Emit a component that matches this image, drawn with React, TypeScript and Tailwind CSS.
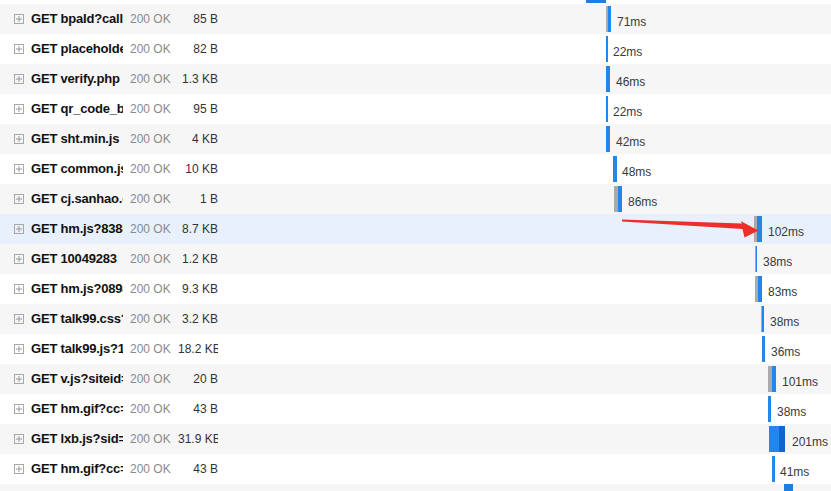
import React from "react";

type Req = {
  name: string;
  size: string;
  start: number; // absolute x of bar start
  wait: number; // gray segment width
  recv: number; // blue segment width
  extra?: number; // darker blue segment width
  gap: number; // space between bar and label
  time: string;
};

const TIMELINE_X = 218;

const requests: Req[] = [
  { name: "bpaId?callback", size: "85 B", start: 606, wait: 2, recv: 3, gap: 6, time: "71ms" },
  { name: "placeholder.js", size: "82 B", start: 606, wait: 0, recv: 2, gap: 5, time: "22ms" },
  { name: "verify.php", size: "1.3 KB", start: 606, wait: 0, recv: 4, gap: 6, time: "46ms" },
  { name: "qr_code_bg.png", size: "95 B", start: 606, wait: 0, recv: 2, gap: 5, time: "22ms" },
  { name: "sht.min.js", size: "4 KB", start: 606, wait: 0, recv: 4, gap: 6, time: "42ms" },
  { name: "common.js", size: "10 KB", start: 613, wait: 0, recv: 4, gap: 5, time: "48ms" },
  { name: "cj.sanhao.com", size: "1 B", start: 614, wait: 4, recv: 4, gap: 6, time: "86ms" },
  { name: "hm.js?8388", size: "8.7 KB", start: 754, wait: 3, recv: 5, gap: 6, time: "102ms" },
  { name: "10049283", size: "1.2 KB", start: 755, wait: 1, recv: 1, gap: 6, time: "38ms" },
  { name: "hm.js?0898", size: "9.3 KB", start: 755, wait: 3, recv: 4, gap: 6, time: "83ms" },
  { name: "talk99.css?v", size: "3.2 KB", start: 761, wait: 1, recv: 2, gap: 6, time: "38ms" },
  { name: "talk99.js?1.0", size: "18.2 KB", start: 762, wait: 0, recv: 3, gap: 6, time: "36ms" },
  { name: "v.js?siteid=1", size: "20 B", start: 768, wait: 4, recv: 4, gap: 6, time: "101ms" },
  { name: "hm.gif?cc=1", size: "43 B", start: 768, wait: 0, recv: 3, gap: 6, time: "38ms" },
  { name: "lxb.js?sid=1", size: "31.9 KB", start: 769, wait: 0, recv: 10, extra: 6, gap: 7, time: "201ms" },
  { name: "hm.gif?cc=1", size: "43 B", start: 772, wait: 0, recv: 3, gap: 5, time: "41ms" },
];

function PlusBox() {
  return (
    <svg width="10" height="10" viewBox="0 0 10 10" className="shrink-0">
      <rect x="0.5" y="0.5" width="9" height="9" fill="none" stroke="#a8a8a8" />
      <path d="M5 2v6M2 5h6" stroke="#999" />
    </svg>
  );
}

function Row({ r, index }: { r: Req; index: number }) {
  const bg = index === 7 ? "bg-[#e8f0fb]" : index % 2 === 0 ? "bg-[#f6f6f6]" : "bg-white";
  return (
    <div className={`flex h-[30px] items-center ${bg}`}>
      <div className="ml-[14px] flex items-center">
        <PlusBox />
      </div>
      <div className="ml-[7px] w-[92px] overflow-hidden whitespace-nowrap text-[13px] font-bold tracking-[-0.2px] text-[#111]">
        GET {r.name}
      </div>
      <div className="ml-[7px] w-[48px] overflow-hidden whitespace-nowrap text-[12px] text-[#8a8a8a]">
        200 OK
      </div>
      <div className="w-[40px] overflow-hidden whitespace-nowrap text-right text-[12px] text-[#333]">
        {r.size}
      </div>
      <div className="flex h-full flex-1 items-center" style={{ paddingLeft: r.start - TIMELINE_X }}>
        <div className="flex h-[26px]">
          {r.wait > 0 && <div className="h-full bg-[#ababab]" style={{ width: r.wait }} />}
          <div className="h-full bg-[#2486ea]" style={{ width: r.recv }} />
          {r.extra && <div className="h-full bg-[#0f66cc]" style={{ width: r.extra }} />}
        </div>
        <span className="whitespace-nowrap pt-[5px] text-[12px] text-[#3a3a3a]" style={{ marginLeft: r.gap }}>
          {r.time}
        </span>
      </div>
    </div>
  );
}

export default function App() {
  return (
    <div className="relative h-[491px] w-[831px] overflow-hidden bg-white font-['Liberation_Sans',Arial,sans-serif]">
      <div className="flex h-[4px] bg-white">
        <div className="ml-[586px] h-[3px] w-[20px] bg-[#1f7fe0]" />
      </div>
      {requests.map((r, i) => (
        <Row key={i} r={r} index={i} />
      ))}
      <div className="flex h-[7px] bg-[#f6f6f6]">
        <div className="ml-[784px] h-full w-[9px] bg-[#1f7fe0]" />
      </div>
      <svg
        className="pointer-events-none absolute left-0 top-0"
        width="831"
        height="491"
        viewBox="0 0 831 491"
      >
        <polygon
          points="622,219.6 742,223.6 740.5,221 758.5,230.5 744.5,237.5 742.5,229 622,221.4"
          fill="#ec2f2a"
        />
      </svg>
    </div>
  );
}
